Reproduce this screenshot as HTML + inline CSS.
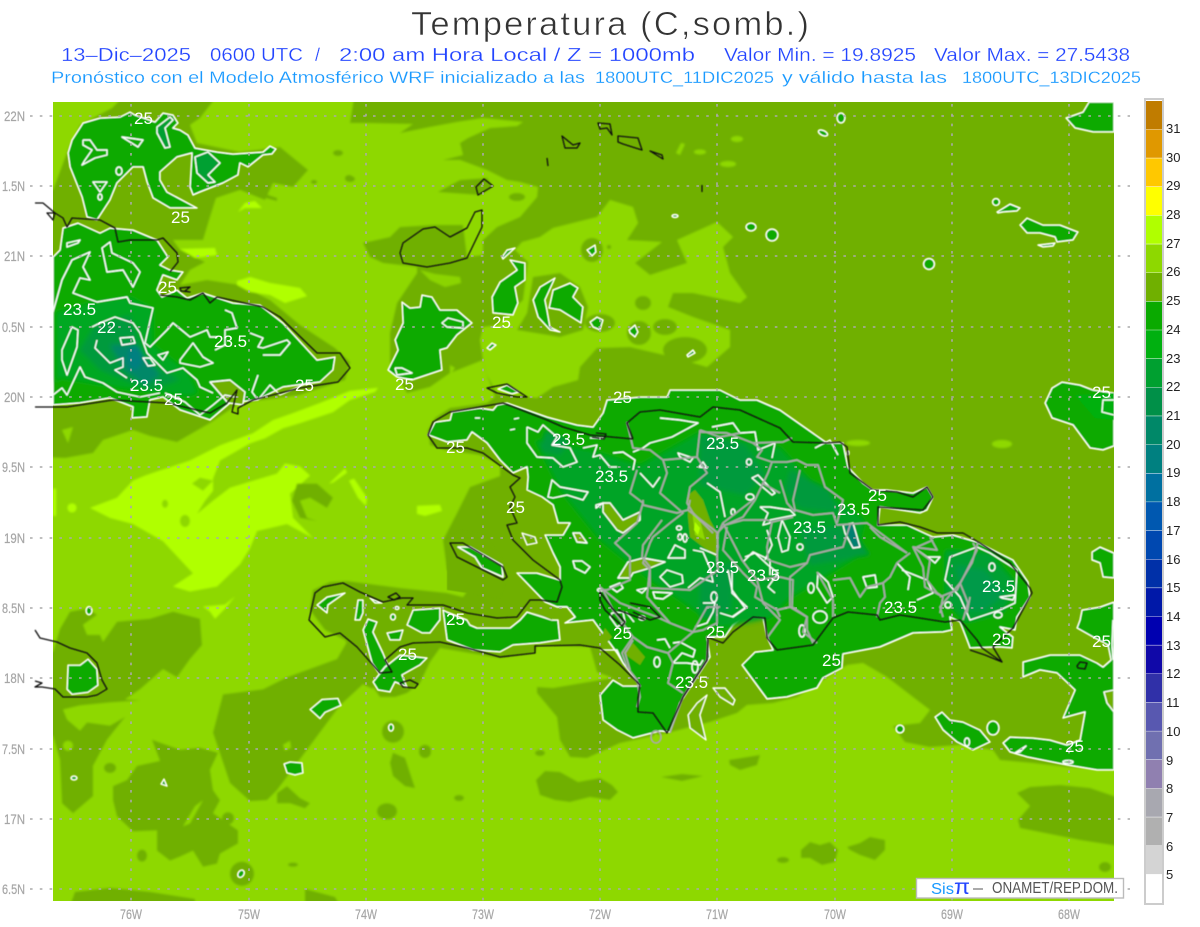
<!DOCTYPE html>
<html lang="es"><head><meta charset="utf-8"><title>Temperatura</title>
<style>
html,body{margin:0;padding:0;background:#fff;width:1200px;height:927px;overflow:hidden}
svg{display:block;font-family:"Liberation Sans",sans-serif}
.d{fill:#70b000}.l{fill:#8ed800}.y{fill:#b0ff00}
.g{fill:#0aaa00;stroke:#fff;stroke-width:1.5;stroke-linejoin:round}
.o{fill:#70b000;stroke:#fff;stroke-width:1.4;stroke-linejoin:round}
.n{fill:#00a030;stroke:#fff;stroke-width:1.3}
.w polyline,.w ellipse,.w polygon{fill:none;stroke:#fff;stroke-width:1.4;stroke-linejoin:round}
.p polyline{fill:none;stroke:#a9a9a9;stroke-width:1.7;stroke-linejoin:round}
.k polyline,.k polygon{fill:none;stroke:#111;stroke-width:1.3;stroke-linejoin:round}
.t text{fill:#fff;font-size:17px}
.a text{fill:#a6a6a6;font-size:13.5px;stroke:#a6a6a6;stroke-width:.2}
.c text{fill:#222;font-size:13px}
.gr line{stroke:#aaa;stroke-width:1.6;stroke-dasharray:2.6 7.2}
</style></head><body>
<svg width="1200" height="927" viewBox="0 0 1200 927" xmlns="http://www.w3.org/2000/svg">
<defs>
<clipPath id="m"><rect x="53" y="102" width="1061" height="799"/></clipPath>
<filter id="b1" x="-2%" y="-2%" width="104%" height="104%"><feGaussianBlur stdDeviation="1.1"/></filter>
<filter id="b2" x="-5%" y="-5%" width="110%" height="110%"><feGaussianBlur stdDeviation="2.5"/></filter>
<filter id="b0" x="-2%" y="-2%" width="104%" height="104%"><feGaussianBlur stdDeviation="0.4"/></filter>
</defs>
<rect width="1200" height="927" fill="#fff"/>
<text x="411" y="35" font-size="33" fill="#333" letter-spacing="2" stroke="#fff" stroke-width=".6" paint-order="fill" textLength="400" lengthAdjust="spacingAndGlyphs">Temperatura (C,somb.)</text>
<g font-size="18" fill="#2244ff" stroke="#fff" stroke-width=".25">
<text x="61" y="61" textLength="130" lengthAdjust="spacingAndGlyphs">13–Dic–2025</text>
<text x="210" y="61" textLength="93" lengthAdjust="spacingAndGlyphs">0600 UTC</text>
<text x="315" y="61">/</text>
<text x="339" y="61" textLength="356" lengthAdjust="spacingAndGlyphs">2:00 am Hora Local / Z = 1000mb</text>
<text x="724" y="61" textLength="192" lengthAdjust="spacingAndGlyphs">Valor Min. = 19.8925</text>
<text x="934" y="61" textLength="196" lengthAdjust="spacingAndGlyphs">Valor Max. = 27.5438</text>
</g>
<g font-size="17" fill="#1899ff" stroke="#fff" stroke-width=".2">
<text x="51" y="83" textLength="534" lengthAdjust="spacingAndGlyphs">Pronóstico con el Modelo Atmosférico WRF inicializado a las</text>
<text x="595" y="83" textLength="179" lengthAdjust="spacingAndGlyphs">1800UTC_11DIC2025</text>
<text x="782" y="83" textLength="165" lengthAdjust="spacingAndGlyphs">y válido hasta las</text>
<text x="962" y="83" textLength="179" lengthAdjust="spacingAndGlyphs">1800UTC_13DIC2025</text>
</g>

<g clip-path="url(#m)">
<g filter="url(#b1)">
<rect x="30" y="80" width="1110" height="840" class="l"/>
<!-- lime band + scaled SW group -->
<g transform="translate(0,400) scale(1,1.008) translate(0,-400)">
<polygon class="y" points="378,388 350,391 320,403 293,413 273,420 253,433 220,445 190,460 160,470 145,475 133,480 117,497 90,507 110,517 133,523 163,540 193,572 173,585 190,590 217,585 240,563 250,547 257,530 287,523 313,537 293,517 290,493 310,475 300,466 285,463 277,473 230,487 213,500 197,513 205,500 213,490 213,478 220,460 250,443 265,438 283,428 300,423 333,412 350,400 375,392"/>
<polygon class="l" points="192,483 200,477 213,480 203,490"/>
<ellipse cx="165" cy="503" rx="3" ry="4" class="l"/><ellipse cx="185" cy="520" rx="5" ry="6" class="l"/>
<polygon class="y" points="329,483 345,468 347,472 333,482"/><polygon class="y" points="349,480 354,478 367,497 366,505 358,497"/>
<polygon class="y" points="417,505 440,504 442,510 425,515 417,513"/>
<circle cx="72" cy="507" r="4.5" class="y"/><rect x="53" y="488" width="3" height="27" class="y"/>
<polygon class="y" points="203,605 225,603 235,595 225,607 215,617 210,610"/>
<polygon class="d" points="297,483 317,483 333,497 327,507 310,497 300,500 307,517 317,520 300,517 292,500"/>
<polygon class="d" points="40,650 53,650 60,627 70,610 87,607 97,613 83,623 87,633 100,633 103,640 117,620 150,617 173,610 200,617 202,643 190,657 177,675 163,667 140,687 125,697 140,698 123,717 107,737 93,763 93,793 73,810 62,800 60,757 53,733 40,733"/>
<polygon class="l" points="140,698 110,700 80,703 63,707 67,717 80,728 87,720 110,723 133,710"/>
<ellipse cx="68" cy="743" rx="5" ry="5" class="l"/><ellipse cx="110" cy="765" rx="6" ry="5" class="d"/>
<polygon class="d" points="113,783 127,777 137,763 160,758 152,737 180,747 200,745 218,750 210,767 213,787 220,797 213,810 238,827 238,840 220,850 217,860 203,863 193,847 180,853 170,857 157,847 157,827 133,828 117,813 113,797"/>
<polygon class="l" points="203,797 190,820 183,823 195,803"/><circle cx="228" cy="815" r="6" class="d"/>
<ellipse cx="142" cy="852" rx="5" ry="6" class="d"/>
<polygon class="d" points="347,640 337,657 287,675 263,687 223,692 213,730 230,780 250,798 267,797 277,787 307,747 340,703 363,682 373,687 373,660"/>
<polygon class="l" points="283,742 290,738 291,745 285,748"/>
<polygon class="d" points="277,790 287,783 300,795 310,800 305,805 290,800 277,800"/>
<polygon class="d" points="393,750 405,755 410,770 415,785 405,783 393,773 390,760"/>
<circle cx="425" cy="748" r="6" class="d"/><ellipse cx="387" cy="808" rx="10" ry="8" class="d"/><circle cx="393" cy="729" r="11" class="d"/>
<circle cx="242" cy="870" r="12" class="d"/><polygon class="d" points="67,910 75,888 110,884 150,888 195,895 195,910"/>
<polygon class="d" points="305,885 335,893 345,910 305,910"/><ellipse cx="293" cy="861" rx="5" ry="2" class="d"/>
</g>
<!-- upper left dark -->
<polygon class="d" points="40,190 53,190 68,150 80,125 112,108 128,92 220,92 200,118 190,125 197,143 240,152 280,147 308,170 293,187 273,183 265,200 240,190 216,198 210,217 203,240 173,240 180,250 205,262 190,270 180,285 207,280 240,285 270,300 300,325 335,348 350,362 345,380 300,395 240,403 210,423 177,442 150,436 133,430 103,440 93,453 65,458 40,457"/>
<ellipse cx="338" cy="153" rx="5" ry="3" class="d"/><ellipse cx="349" cy="178" rx="4" ry="3" class="d"/><ellipse cx="314" cy="182" rx="3" ry="2" class="d"/>
<polygon class="d" points="250,192 265,194 277,198 277,201 262,197"/>
<polygon class="y" points="238,212 245,203 255,201 262,208 245,208"/>
<polygon class="y" points="180,249 215,248 217,255 195,258"/>
<polygon class="y" points="237,281 250,277 270,283 300,288 307,296 285,303 270,295 250,292 237,285"/>
<polygon class="l" points="62,430 73,427 68,443"/>
<!-- main east dark -->
<polygon class="d" points="355,92 1130,92 1130,770 1114,770 1067,767 1033,763 1000,760 993,750 960,745 930,747 905,742 893,726 920,723 930,710 913,697 887,677 863,663 847,665 823,680 797,697 773,703 747,705 737,713 710,722 667,733 620,743 587,758 570,757 560,740 557,717 537,693 537,687 553,688 600,680 613,678 597,672 590,647 537,645 535,653 500,658 440,648 430,662 420,683 407,693 395,697 380,697 373,687 345,640 325,630 310,610 313,590 330,582 347,581 400,588 447,593 463,597 473,583 447,570 443,540 457,513 470,487 500,476 500,465 480,455 445,450 430,445 428,430 435,418 450,408 487,403 495,397 487,375 483,360 450,373 430,387 407,393 390,363 390,333 397,303 417,273 417,267 383,263 370,257 363,243 390,237 400,227 433,225 463,225 467,257 483,255 483,240 497,227 520,217 537,197 538,187 520,182 507,180 487,170 460,160 443,160 463,155 460,143 468,138 490,128 517,126 523,122 483,118 457,122 430,127 400,133 413,124 367,123 350,123"/>
<polygon class="d" points="438,192 460,180 487,178 493,187 480,195"/>
<ellipse cx="350" cy="179" rx="5" ry="3" class="d"/>
<!-- light lobe -->
<polygon class="l" points="522,242 540,237 553,228 597,217 610,200 633,207 638,223 627,240 662,242 635,263 650,275 687,263 677,240 717,222 733,237 723,247 730,273 747,297 740,303 693,293 673,293 668,307 693,317 730,330 730,347 707,367 673,357 630,347 597,348 580,367 578,380 553,387 537,398 497,394 487,375 483,360 480,340 483,327 497,325 523,300 528,262 515,250"/>
<polygon class="d" points="527,313 533,277 560,273 580,287 588,307 583,330 560,337 517,330"/>
<ellipse cx="643" cy="303" rx="8" ry="7" class="d"/><ellipse cx="639" cy="333" rx="12" ry="12" class="d"/>
<ellipse cx="665" cy="327" rx="12" ry="8" class="d"/><ellipse cx="685" cy="350" rx="22" ry="13" class="d"/>
<ellipse cx="600" cy="323" rx="15" ry="9" class="d"/><ellipse cx="592" cy="250" rx="11" ry="12" class="d"/>
<ellipse cx="517" cy="197" rx="8" ry="4" class="d"/><ellipse cx="609" cy="247" rx="2" ry="2" class="d"/>
<polygon class="l" points="676,153 681,143 685,144 680,155"/><ellipse cx="700" cy="152" rx="6" ry="2.5" class="l"/>
<ellipse cx="728" cy="164" rx="8" ry="3" class="l"/><ellipse cx="737" cy="139" rx="6" ry="3" class="l"/>
<ellipse cx="858" cy="443" rx="12" ry="3" class="l"/><ellipse cx="1002" cy="444" rx="10" ry="4" class="l"/>
<polygon class="l" points="420,270 435,274 460,277 461,283 445,287 430,280" opacity=".9"/>
<polygon class="l" points="450,365 455,368 450,375" />
<!-- other dark blobs -->
<polygon class="d" points="536,780 545,771 560,772 578,782 600,778 612,785 618,792 610,800 590,797 570,802 555,800 540,795"/>
<ellipse cx="459" cy="798" rx="5" ry="3" class="d"/><ellipse cx="540" cy="753" rx="5" ry="3" class="d"/>
<polygon class="d" points="729,760 760,755 757,765 740,770 730,765"/><polygon class="d" points="661,777 682,774 703,776 682,781"/>
<polygon class="d" points="801,850 810,842 820,845 830,842 838,850 835,862 822,865 810,858 801,858"/><ellipse cx="783" cy="860" rx="6" ry="3" class="d"/>
<polygon class="d" points="847,847 860,843 870,837 885,840 885,850 875,860 860,855 850,850"/>
<polygon class="d" points="1017,793 1030,787 1060,785 1090,788 1125,800 1125,847 1080,840 1045,833 1020,828 1018,820 1030,806"/>
<ellipse cx="1105" cy="867" rx="6" ry="5" class="d"/>
<polygon class="d" points="893,726 905,742 930,747 915,735"/>
<ellipse cx="425" cy="752" rx="6" ry="6" class="d"/>
</g>

<g filter="url(#b0)">
<!-- green regions -->
<polygon class="g" points="68,153 72,140 83,123 100,118 120,117 130,112 135,115 155,122 163,113 173,115 178,123 173,128 180,130 188,135 195,148 217,152 233,154 263,152 270,146 276,149 272,154 263,155 248,167 240,163 238,175 223,183 200,192 193,195 190,187 192,153 177,157 160,172 160,180 167,192 197,208 170,208 153,198 147,182 143,167 133,167 117,183 110,200 97,220 87,217 82,197 70,167"/>
<polygon class="g" points="53,257 60,250 63,228 78,223 100,233 110,228 133,230 157,240 168,257 160,265 170,270 183,272 177,280 163,275 157,290 162,297 177,290 187,298 203,293 233,303 260,305 283,323 317,360 335,357 333,370 320,382 283,387 273,392 257,400 230,403 210,420 180,410 163,397 150,400 147,417 132,418 133,407 110,398 80,403 53,405"/>
<g filter="url(#b2)">
<polygon fill="#00a822" points="56,312 95,302 130,297 153,309 153,345 188,372 198,393 188,396 120,388 60,378 56,383"/>
<polygon fill="#009a3c" points="95,325 130,315 145,360 180,380 150,390 100,370 80,350"/>
<polygon fill="#008868" points="110,345 135,345 160,375 145,385 125,370"/>
<ellipse cx="135" cy="358" rx="7" ry="12" fill="#008080"/>
</g>
<polygon class="o" points="210,382 230,380 245,392 243,405 228,403"/>
<polygon class="g" points="402,302 410,308 420,307 422,295 432,297 440,310 457,310 472,323 457,335 447,348 440,350 442,370 427,375 412,380 397,377 388,370 398,350 395,340 403,323"/>
<polygon class="g" points="510,260 525,263 525,280 515,287 518,303 513,315 493,313 492,297 500,282 517,270"/>
<polygon class="g" points="502,257 507,250 515,248 503,259"/><polygon class="g" points="487,348 492,343 496,345 490,350"/>
<polygon class="g" points="555,278 540,287 533,300 538,317 550,330 560,332 550,327 547,310 545,300"/>
<polygon class="g" points="553,290 570,283 578,288 573,297 583,307 581,323 560,310 549,308"/>
<polygon class="g" points="590,322 597,317 603,320 600,330 593,327"/><polygon class="g" points="629,330 635,325 638,332 635,337 630,333"/>
<polygon class="g" points="687,355 693,350 695,353 688,357"/><polygon class="g" points="587,250 595,245 596,252 592,256"/>
<ellipse cx="675" cy="216" rx="3" ry="1.5" class="g"/><ellipse cx="751" cy="227" rx="5" ry="4" class="g"/>
<circle cx="772" cy="235" r="6" class="g"/><circle cx="929" cy="264" r="5.5" class="g"/>
<ellipse cx="841" cy="118" rx="4" ry="5" class="g"/><ellipse cx="823" cy="133" rx="5" ry="2.5" class="g" transform="rotate(25 823 133)"/>
<circle cx="996" cy="202" r="3.5" class="g"/>
<polygon class="g" points="997,212 1010,204 1020,208 1017,211 1003,212 998,213"/>
<polygon class="g" points="1020,225 1027,218 1043,225 1060,225 1078,232 1073,240 1057,242 1055,237 1040,233 1027,233"/>
<polygon class="g" points="1038,245 1055,243 1053,246 1043,247"/>
<polygon class="g" points="1089,102 1083,112 1066,118 1075,128 1093,132 1114,132 1114,102"/>
<polygon class="g" points="1045,403 1052,388 1062,382 1080,385 1093,390 1114,393 1114,446 1103,450 1090,448 1073,425 1052,418"/>
<polygon fill="#00b010" points="1075,395 1114,393 1114,420 1095,418"/>
<polygon class="g" points="1092,552 1100,547 1114,553 1114,578 1103,577 1100,563 1092,560"/>
<polygon class="g" points="1114,602 1100,607 1082,610 1080,620 1077,628 1093,637 1108,645 1111,660 1103,667 1097,663 1080,655 1050,655 1023,662 1023,677 1040,670 1057,673 1075,690 1063,718 1085,712 1080,740 1067,745 1050,740 1033,738 1010,737 1003,743 1010,752 1027,757 1067,765 1097,770 1114,770"/>
<polygon class="o" points="1114,690 1104,692 1107,703 1114,712"/>
<polygon class="g" points="935,717 942,712 950,720 963,722 980,730 990,742 973,750 957,742 943,730"/>
<ellipse cx="993" cy="728" rx="6" ry="7" class="g"/><ellipse cx="900" cy="729" rx="4" ry="4" class="g"/>
<polygon class="g" points="1015,753 1026,746 1020,752"/><ellipse cx="1068" cy="762" rx="5" ry="1.5" class="g"/>
<g transform="translate(0,400) scale(1,1.008) translate(0,-400)">
<polygon class="g" points="68,663 80,663 88,657 97,667 98,683 88,690 72,692 67,687"/>
<polygon class="g" points="310,707 322,697 338,696 341,703 325,710 320,716"/>
<polygon class="g" points="284,761 290,759 302,760 303,770 295,772 287,770"/>
<ellipse cx="89" cy="609" rx="3" ry="4" class="g"/><ellipse cx="74" cy="775" rx="3" ry="2" class="g"/>
<polygon class="g" points="161,781 164,776 167,783"/><ellipse cx="241" cy="870" rx="3" ry="4" class="g" transform="rotate(35 241 870)"/>
<ellipse cx="391" cy="725" rx="2.5" ry="3.5" class="g"/>
</g>
<polygon class="g" points="317,605 327,597 345,593 328,605 327,613"/>
<polygon class="g" points="355,620 358,600 363,600 363,613 360,620"/>
<polygon class="g" points="363,630 368,619 377,622 373,632 383,653 390,670 380,675 372,663"/>
<polygon class="g" points="373,682 385,667 400,655 427,658 420,665 402,675 407,687 395,682 390,692 378,690"/>
<polygon class="g" points="407,625 413,610 440,608 440,620 430,633 422,633"/>
<polygon class="g" points="387,633 403,630 400,640 390,640"/><polygon class="g" points="370,598 382,603 375,603"/>
<ellipse cx="393" cy="617" rx="2.5" ry="3" class="g"/><ellipse cx="397" cy="608" rx="2" ry="1.5" class="g"/>
<polygon class="g" points="443,610 447,640 473,650 500,652 513,645 540,643 560,640 558,620 552,620 527,612 520,620 510,628 477,628 470,625 467,620 447,612"/>
<polygon class="g" points="600,695 613,680 623,686 640,686 623,663 617,653 593,620 565,623 575,617 567,607 557,607 545,602 517,573 537,573 560,580 560,567 553,553 545,535 563,535 570,523 558,523 553,505 542,497 527,490 528,477 527,467 513,473 500,460 487,443 472,432 467,440 447,442 428,435 435,422 450,420 452,412 480,408 493,410 497,405 507,403 547,417 577,425 593,427 603,413 607,400 640,397 667,397 670,390 697,390 720,390 740,400 757,400 780,410 827,443 843,443 848,467 863,483 873,490 887,490 913,493 927,487 933,497 927,510 920,513 880,507 878,525 907,525 933,537 953,535 977,542 1013,560 1028,582 1030,597 1017,617 1015,630 1000,627 1013,637 1012,648 1000,647 970,648 967,640 960,622 950,617 952,630 943,632 913,633 880,647 843,654 842,668 823,678 817,688 787,697 767,699 742,665 755,652 773,650 767,637 763,618 743,617 733,625 725,637 707,637 710,657 680,703 670,732 660,731 633,738 617,730 603,720"/>
<!-- depth patches -->
<g filter="url(#b2)">
<polygon fill="#00a428" points="535,440 590,450 640,465 700,432 780,447 810,480 865,520 855,558 790,598 770,618 720,628 680,600 650,580 600,540 560,490"/>
<polygon fill="#009a3c" points="700,435 745,445 765,475 745,495 700,485"/><polygon fill="#009a3c" points="790,470 830,490 838,512 800,508 785,490"/>
<polygon fill="#009a3c" points="700,580 735,560 730,610 700,620"/><polygon fill="#009a3c" points="800,530 850,525 870,555 810,565"/>
<polygon fill="#009a3c" points="545,430 570,440 560,455 540,450"/>
<polygon fill="#00a030" points="945,550 990,552 1018,585 1003,613 965,623 945,600"/>
<polygon fill="#009a48" points="955,565 985,570 1005,595 985,610 965,610"/>
</g>
<polygon fill="#007f70" points="845,526 853,525 860,546 853,547"/>
<!-- olive overlays -->
<polygon class="o" points="603,503 610,503 623,520 640,512 640,520 623,533 617,530 603,512"/>
<polygon class="o" points="522,533 535,537 537,543 527,545"/><polygon class="o" points="573,533 580,533 587,543 577,542"/>
<polygon class="o" points="618,578 628,562 643,558 665,562 650,568 633,573 630,578"/>
<polygon class="d" points="688,495 695,490 703,500 710,520 718,535 718,558 703,547 690,537 688,517"/>
<polygon class="l" points="692,510 700,520 705,540 695,535"/><polygon class="y" points="695,522 700,528 698,535 694,530"/>
<polygon class="o" points="713,688 725,688 735,700 733,705 720,697"/>
<polygon class="d" points="623,653 633,643 645,657 640,665"/><polygon class="d" points="605,628 612,637 605,645 600,640"/>
<polygon class="o" points="697,703 707,695 700,715 706,740 690,728 688,715"/>
<polygon class="d" points="533,612 552,620 555,610 530,600"/>
<polygon class="d" points="447,540 447,590 500,598 510,570 485,535 460,530"/>
<polygon class="g" points="458,547 470,547 502,565 503,577 482,568 475,557"/>
<polygon class="g" points="498,389 507,385 519,392 512,394"/>
<!-- white inner contours -->
<g class="w">
<polyline points="83,140 90,140 97,150 107,150 107,155 95,158 82,165 85,160 92,150 83,145 83,140"/>
<polygon points="122,137 143,140 138,147"/><ellipse cx="119" cy="171" rx="3" ry="4"/>
<polygon points="93,182 107,182 100,192"/><ellipse cx="100" cy="197" rx="2" ry="3"/>
<polygon style="fill:#00a030" points="157,127 170,117 173,120 165,128 170,147 165,148 157,133"/>
<polygon style="fill:#00a030" points="195,157 208,152 220,163 208,175 215,182 208,183 197,173"/>
<polyline points="53,395 62,388 67,395 80,367 85,377 103,383 117,392 140,397 160,393"/>
<polyline points="53,312 62,280 72,260 90,252 83,267 90,280 80,278 73,293 97,302 127,297 130,303 153,308 145,343 150,347 167,330 173,323 190,337 207,330 210,337 217,337"/>
<polygon points="102,248 110,242 112,253 133,263 140,272 133,287 123,270 107,272"/>
<polygon points="67,243 80,240 78,243 67,247"/><polygon points="62,350 72,327 78,330 77,347 67,375 62,360"/>
<polyline points="92,327 100,323 115,317 133,323 140,333 147,353 167,373 183,368 197,380 200,387 213,393"/>
<polyline points="97,340 95,348 110,363 123,358 123,367 115,370 127,378"/>
<polygon points="120,338 133,337 135,343 122,345"/><polygon points="143,358 150,358 155,365 148,366"/>
<polygon points="158,355 168,352 163,360"/><polygon points="180,360 193,343 203,357 213,363 200,367 180,363"/>
<polyline points="225,310 232,313 237,328 225,330 225,345 215,350"/>
<polyline points="250,333 263,338 258,347 263,348 287,340 290,343 280,355 263,355"/>
<polyline points="165,393 185,402 200,415 213,405 225,395 235,397"/>
<polyline points="258,375 252,392 258,400 270,385 280,395 310,382"/>
<polygon points="442,323 448,318 463,322 463,328 447,327"/><polyline points="395,368 402,368 412,373 397,375 395,368"/>
<polyline points="1114,400 1103,400 1102,412 1114,415"/>
<polyline points="1113,620 1112,645 1113,660"/>
<ellipse cx="967" cy="742" rx="2.5" ry="4"/>
<polyline points="527,427 538,432 543,425 557,437 552,445 570,448 577,462 563,467 553,458 537,457 527,443 527,427"/>
<polyline points="583,448 597,445 593,457 600,455 610,467 617,467"/>
<polyline points="613,453 623,452 635,460 633,470"/>
<polygon points="552,480 560,487 588,492 583,500 567,495 553,498 548,497"/>
<polyline points="475,418 480,418"/><polyline points="514,419 519,418"/><polyline points="510,430 515,429"/>
<polyline points="660,418 680,420 698,423 672,437 650,443 643,448 633,452"/>
<polyline points="640,473 653,487 660,477"/>
<polyline points="712,427 733,423 740,433 755,432 758,450 775,443 772,458"/>
<polygon points="678,453 693,458 690,462 680,457"/><polygon points="703,462 707,468 699,467"/>
<polygon points="675,545 685,550 685,558 668,558"/><polygon points="660,577 667,570 682,575 683,583 670,587"/>
<polyline points="693,550 703,552 710,568 713,582 700,578 688,588"/>
<polygon points="653,592 672,593 663,599 655,598"/><polygon points="610,587 620,583 623,588 617,592"/>
<polygon points="637,590 647,588 642,593"/><polygon points="612,613 623,612 625,622 617,627 610,617"/>
<polyline points="703,603 715,603 713,612 707,623 695,627"/><ellipse cx="714" cy="597" rx="3" ry="5"/>
<polyline points="657,640 665,639 670,648"/><polyline points="673,643 680,642 695,650 693,657 682,653 673,663 687,663 700,665 703,660"/>
<ellipse cx="657" cy="662" rx="3" ry="5"/><ellipse cx="695" cy="667" rx="3" ry="6"/>
<polyline points="732,572 732,593 747,607 733,617 720,613"/>
<polyline points="743,562 753,552 770,560 770,575"/>
<polygon points="782,520 790,537 788,550 782,552 778,537"/>
<polyline points="760,507 770,507 790,510 795,515 770,520 770,523 763,525 768,513 760,507"/>
<polyline points="745,557 755,553 768,565 778,573 768,587 775,593"/>
<polyline points="728,570 732,590 745,608 732,617"/><polyline points="700,548 717,555 718,570"/><polyline points="707,483 720,492 725,517"/>
<polygon points="752,478 758,475 775,493 772,495"/><ellipse cx="750" cy="497" rx="4" ry="3"/><ellipse cx="733" cy="512" rx="2" ry="3"/><ellipse cx="800" cy="547" rx="3" ry="3"/>
<polygon points="843,525 853,523 860,547 853,548 845,533"/>
<polygon points="863,577 875,575 877,587 867,588"/><polyline points="897,563 910,577 908,590"/>
<polyline points="902,570 927,580 933,593 917,600"/><polyline points="913,547 927,557 940,557 935,563 928,557"/>
<polygon points="950,557 977,547 990,553 1017,570 1015,603 1000,610 970,620 960,597 945,580"/>
<polygon points="1000,597 1015,595 1013,600 1002,598"/><ellipse cx="992" cy="567" rx="3" ry="4"/><ellipse cx="998" cy="615" rx="4" ry="3"/><ellipse cx="948" cy="605" rx="3" ry="3"/>
<ellipse cx="820" cy="617" rx="7" ry="6"/><ellipse cx="811" cy="588" rx="3" ry="5"/><ellipse cx="802" cy="631" rx="3" ry="6"/>
<polygon points="818,573 828,582 833,597 827,603 817,587"/><ellipse cx="749" cy="462" rx="2.5" ry="3"/>
<polyline points="767,530 772,545 765,560"/>
<polyline points="815,448 830,440 838,455"/>
<ellipse cx="679" cy="528" rx="2.5" ry="2"/><ellipse cx="680" cy="537" rx="2" ry="3"/><ellipse cx="685" cy="538" rx="2" ry="4"/>
<ellipse cx="642" cy="618" rx="3" ry="2"/><ellipse cx="600" cy="590" rx="2.5" ry="1.5"/>
<polyline points="590,438 604,438"/><polyline points="626,612 634,622"/>
<polygon points="573,561 582,561 590,567 585,573 575,568"/>
<polygon points="596,505 603,503 596,508"/>
<polyline points="557,607 567,607 575,617 565,623"/>
<polyline points="600,650 617,650 623,663"/>
<ellipse cx="848" cy="453" rx="1" ry="2"/>
</g>
<!-- provinces -->
<g class="p">
<polyline points="700,432 727,433 753,443 783,442 792,438"/>
<polyline points="753,443 762,450 757,457 772,462 768,473 755,500 743,517 725,525 717,533 718,547 717,553"/>
<polyline points="772,462 787,462 797,460 807,465 818,465 825,487 843,500 837,523"/>
<polyline points="800,470 793,500 795,510 813,515 833,513 837,525 867,523 907,553"/>
<polyline points="780,480 787,503 795,512"/><polyline points="762,483 780,493"/>
<polyline points="725,525 743,520 767,520 772,522 793,517"/>
<polyline points="772,522 767,547 768,560 790,567 807,563 810,555 843,547 850,525"/>
<polyline points="727,527 723,550 743,573 757,587 755,597 777,610 780,617"/>
<polyline points="807,563 790,577 790,607 807,617 807,630 813,643"/><polyline points="790,607 777,610"/>
<polyline points="817,572 833,600 833,617"/>
<polyline points="833,580 850,578 860,597 867,587 883,583 885,597 880,603 877,617"/>
<polyline points="910,553 897,563 890,577 883,583"/>
<polyline points="913,547 930,560 927,580 937,593 943,597 940,613"/>
<polyline points="940,597 957,590 977,550 973,543"/><polyline points="970,597 967,613"/>
<polyline points="870,527 880,537 907,553"/><polyline points="917,547 933,540"/>
<polyline points="978,542 972,563 960,583 968,603 963,620"/><polyline points="960,583 940,607 943,617"/>
<polyline points="930,537 937,550 913,547 923,567 925,587 943,597"/>
<polyline points="643,500 643,505 677,513 688,510 690,500"/>
<polyline points="688,510 718,533 723,523 753,500"/>
<polyline points="662,520 643,545 642,557 650,567 647,597 670,623 693,632 707,607 720,607"/>
<polyline points="718,533 717,560 718,570 700,583 690,590 650,588"/>
<polyline points="600,587 620,603 657,617 670,623"/>
<polyline points="717,607 717,623 703,630 693,632"/>
<polyline points="633,637 647,647 668,653 673,663 668,683 683,693"/>
<polyline points="633,637 622,653 627,667 637,680 640,697 637,707"/>
<polyline points="693,632 668,653"/>
<polyline points="723,523 742,560 757,580 763,603 780,620 767,638"/>
<polyline points="757,580 780,577 793,580 792,607 807,617 803,632 817,643"/>
<polyline points="627,422 633,448 650,450 663,460 667,473 660,493 683,513 670,523 653,537 650,543 643,563 650,570 650,587"/>
<polyline points="663,460 697,457 700,430"/><polyline points="700,430 720,437 740,433"/>
<polyline points="697,457 707,473 690,487 687,503 693,513 713,533"/>
<polyline points="637,470 633,483 630,493 643,503 637,523 615,543 630,557 630,580 607,590 600,590"/>
<polyline points="603,590 613,610 633,637"/><polyline points="633,640 625,653 630,670"/>
<polyline points="670,733 683,697 707,660 708,640" />
<ellipse cx="656" cy="737" rx="5" ry="6" style="fill:none;stroke:#a9a9a9;stroke-width:1.7"/>
</g>
<ellipse cx="656" cy="737" rx="2" ry="3" fill="#8ed800"/>
</g>
</g>
<!-- coast -->
<g class="k" filter="url(#b0)">
<polyline points="35,203 43,203 55,213 47,213 53,220 55,213 63,218 67,227 72,218 100,220 115,228 118,242 130,240 157,240 163,238 177,253 178,262 170,272"/>
<polygon points="180,288 190,287 185,291 190,292 181,291"/>
<polyline points="160,295 177,297 190,300 203,293 210,303 217,297 263,307 280,317 317,353 340,353 350,368 338,382 300,388 253,400 238,408 238,414 232,412 237,390 227,403 210,413 167,403 113,400 67,407 35,407"/>
<polyline points="35,630 40,638 57,642 70,648 87,653 97,663 102,680 107,689 97,695 87,697 63,697 55,689 42,687 35,687 42,683 35,681"/>
<polygon points="598,123 610,124 612,135 607,128 600,129"/><polygon points="618,136 638,138 642,150 623,144 618,142"/>
<polygon points="562,136 573,145 580,143 577,148 565,148"/><polygon points="650,151 662,155 663,159"/>
<polyline points="547,158 548,166"/><polyline points="702,185 702,192"/>
<polygon points="476,187 484,179 493,186 478,195"/>
<polygon points="403,243 423,229 435,227 450,237 467,228 475,212 482,210 482,227 467,258 450,263 427,267 403,263 400,253"/>
<polygon points="487,388 507,384 527,397 517,397 497,393"/>
<polygon points="450,543 463,543 503,567 507,577 503,580 483,570 457,557"/>
<polyline points="633,439 590,435 563,427 547,420 503,403 450,412 433,422 428,435 437,448 453,448 467,448 483,453 513,475 520,478 510,487 515,497 510,507 517,523 507,525 513,540 533,560 560,580 562,587 557,602 540,600 530,600 517,617 497,618 467,613 443,605 407,605 413,598 402,598 383,602 360,592 343,583 323,587 315,593 309,620 325,637 340,633 357,647 380,673 392,672 385,660 400,647 413,643 440,642 467,648 500,657 535,653 535,646 580,645 600,648 620,665 640,685 638,698 638,712 653,713 667,733 683,697 707,660 708,640 707,637 723,643 733,632 753,617 765,618 767,638 777,650 813,645 833,618 848,612 877,615 880,620 900,615 913,617 945,622 960,620 977,640 982,648 1002,662 993,647 1013,628 1032,593 1030,588 1010,563 980,543 963,533 937,533 920,527 900,522 878,525 878,507 923,510 933,497 927,487 913,497 897,492 873,490 850,473 847,447 840,442 827,443 793,442 780,428 740,410 713,407 700,417 660,410 640,412 627,423 633,439"/>
<polyline points="592,437 604,439 606,434 596,433"/>
<polygon points="600,592 612,608 625,622 622,626 605,610 600,600"/>
<polyline points="618,610 645,620"/><polyline points="630,603 650,607 660,617 650,620 633,612"/>
<polygon points="1077,666 1080,662 1087,663 1085,669 1078,668"/>
<polyline points="970,650 985,655 1002,662"/>
<polygon points="400,683 410,680 418,684 415,688 403,687"/>
<polygon points="388,597 396,593 400,597 394,600"/>
</g>
<!-- grid -->
<g class="gr">
<line x1="30" y1="116" x2="1130" y2="116"/><line x1="30" y1="186" x2="1130" y2="186"/><line x1="30" y1="256" x2="1130" y2="256"/><line x1="30" y1="327" x2="1130" y2="327"/>
<line x1="30" y1="397" x2="1130" y2="397"/><line x1="30" y1="467" x2="1130" y2="467"/><line x1="30" y1="538" x2="1130" y2="538"/><line x1="30" y1="608" x2="1130" y2="608"/>
<line x1="30" y1="678" x2="1130" y2="678"/><line x1="30" y1="749" x2="1130" y2="749"/><line x1="30" y1="819" x2="1130" y2="819"/><line x1="30" y1="889" x2="1130" y2="889"/>
<line x1="131" y1="104" x2="131" y2="906"/><line x1="249" y1="104" x2="249" y2="906"/><line x1="366" y1="104" x2="366" y2="906"/><line x1="483" y1="104" x2="483" y2="906"/>
<line x1="600" y1="104" x2="600" y2="906"/><line x1="717" y1="104" x2="717" y2="906"/><line x1="835" y1="104" x2="835" y2="906"/><line x1="952" y1="104" x2="952" y2="906"/><line x1="1069" y1="104" x2="1069" y2="906"/>
</g>
<!-- contour labels -->
<g class="t">
<text x="134" y="124">25</text><text x="171" y="223">25</text><text x="158" y="293">25</text><text x="63" y="315">23.5</text><text x="97" y="333">22</text>
<text x="214" y="347">23.5</text><text x="130" y="391">23.5</text><text x="164" y="405">25</text><text x="295" y="391">25</text><text x="395" y="390">25</text>
<text x="492" y="328">25</text><text x="613" y="403">25</text><text x="446" y="453">25</text><text x="552" y="445">23.5</text><text x="595" y="482">23.5</text>
<text x="506" y="513">25</text><text x="706" y="449">23.5</text><text x="868" y="501">25</text><text x="837" y="515">23.5</text><text x="793" y="533">23.5</text>
<text x="706" y="573">23.5</text><text x="747" y="581">23.5</text><text x="982" y="592">23.5</text><text x="884" y="613">23.5</text>
<text x="446" y="625">25</text><text x="613" y="639">25</text><text x="706" y="638">25</text><text x="398" y="660">25</text><text x="822" y="666">25</text>
<text x="992" y="645">25</text><text x="1092" y="647">25</text><text x="1092" y="398">25</text><text x="675" y="688">23.5</text><text x="1065" y="752">25</text>
</g>
<!-- axis labels -->
<g class="a">
<text x="4" y="121" textLength="21" lengthAdjust="spacingAndGlyphs">22N</text><text x="2" y="191" textLength="23" lengthAdjust="spacingAndGlyphs">1.5N</text><text x="4" y="261" textLength="21" lengthAdjust="spacingAndGlyphs">21N</text><text x="2" y="332" textLength="23" lengthAdjust="spacingAndGlyphs">0.5N</text><text x="4" y="402" textLength="21" lengthAdjust="spacingAndGlyphs">20N</text><text x="2" y="472" textLength="23" lengthAdjust="spacingAndGlyphs">9.5N</text>
<text x="4" y="543" textLength="21" lengthAdjust="spacingAndGlyphs">19N</text><text x="2" y="613" textLength="23" lengthAdjust="spacingAndGlyphs">8.5N</text><text x="4" y="683" textLength="21" lengthAdjust="spacingAndGlyphs">18N</text><text x="2" y="754" textLength="23" lengthAdjust="spacingAndGlyphs">7.5N</text><text x="4" y="824" textLength="21" lengthAdjust="spacingAndGlyphs">17N</text><text x="2" y="894" textLength="23" lengthAdjust="spacingAndGlyphs">6.5N</text>
</g>
<g class="a">
<text x="120" y="919" textLength="22" lengthAdjust="spacingAndGlyphs">76W</text><text x="238" y="919" textLength="22" lengthAdjust="spacingAndGlyphs">75W</text><text x="355" y="919" textLength="22" lengthAdjust="spacingAndGlyphs">74W</text><text x="472" y="919" textLength="22" lengthAdjust="spacingAndGlyphs">73W</text><text x="589" y="919" textLength="22" lengthAdjust="spacingAndGlyphs">72W</text><text x="706" y="919" textLength="22" lengthAdjust="spacingAndGlyphs">71W</text><text x="824" y="919" textLength="22" lengthAdjust="spacingAndGlyphs">70W</text><text x="941" y="919" textLength="22" lengthAdjust="spacingAndGlyphs">69W</text><text x="1058" y="919" textLength="22" lengthAdjust="spacingAndGlyphs">68W</text>
</g>
<!-- legend -->
<rect x="1145" y="99" width="18" height="805" fill="#fff" stroke="#ccc" stroke-width="2"/>
<g>
<rect x="1146" y="101" width="16" height="28.2" fill="#c07c00"/><rect x="1146" y="129.6" width="16" height="28.2" fill="#e09800"/><rect x="1146" y="158.3" width="16" height="28.2" fill="#ffc800"/><rect x="1146" y="187" width="16" height="28.2" fill="#ffff00"/>
<rect x="1146" y="215.6" width="16" height="28.2" fill="#b0ff00"/><rect x="1146" y="244.3" width="16" height="28.2" fill="#8ed800"/><rect x="1146" y="272.9" width="16" height="28.2" fill="#70b000"/><rect x="1146" y="301.6" width="16" height="28.2" fill="#0aaa00"/>
<rect x="1146" y="330.2" width="16" height="28.2" fill="#00b010"/><rect x="1146" y="358.9" width="16" height="28.2" fill="#00a030"/><rect x="1146" y="387.5" width="16" height="28.2" fill="#009048"/><rect x="1146" y="416.2" width="16" height="28.2" fill="#008868"/>
<rect x="1146" y="444.8" width="16" height="28.2" fill="#008080"/><rect x="1146" y="473.5" width="16" height="28.2" fill="#0070a0"/><rect x="1146" y="502.1" width="16" height="28.2" fill="#0058b0"/><rect x="1146" y="530.8" width="16" height="28.2" fill="#0048b0"/>
<rect x="1146" y="559.4" width="16" height="28.2" fill="#0030a8"/><rect x="1146" y="588.1" width="16" height="28.2" fill="#0018a8"/><rect x="1146" y="616.7" width="16" height="28.2" fill="#0000b0"/><rect x="1146" y="645.4" width="16" height="28.2" fill="#1008a8"/>
<rect x="1146" y="674" width="16" height="28.2" fill="#3030a8"/><rect x="1146" y="702.7" width="16" height="28.2" fill="#5858b0"/><rect x="1146" y="731.3" width="16" height="28.2" fill="#7070b0"/><rect x="1146" y="760" width="16" height="28.2" fill="#9080b0"/>
<rect x="1146" y="788.6" width="16" height="28.2" fill="#a8a8b0"/><rect x="1146" y="817.3" width="16" height="28.2" fill="#b0b0b0"/><rect x="1146" y="845.9" width="16" height="28.2" fill="#d4d4d4"/><rect x="1146" y="874.6" width="16" height="28.2" fill="#fff"/>
</g>
<g class="c">
<text x="1166" y="133">31</text><text x="1166" y="162">30</text><text x="1166" y="190">29</text><text x="1166" y="219">28</text><text x="1166" y="248">27</text><text x="1166" y="276">26</text><text x="1166" y="305">25</text>
<text x="1166" y="334">24</text><text x="1166" y="363">23</text><text x="1166" y="391">22</text><text x="1166" y="420">21</text><text x="1166" y="449">20</text><text x="1166" y="477">19</text><text x="1166" y="506">18</text>
<text x="1166" y="535">17</text><text x="1166" y="564">16</text><text x="1166" y="592">15</text><text x="1166" y="621">14</text><text x="1166" y="650">13</text><text x="1166" y="678">12</text><text x="1166" y="707">11</text>
<text x="1166" y="736">10</text><text x="1166" y="765">9</text><text x="1166" y="793">8</text><text x="1166" y="822">7</text><text x="1166" y="851">6</text><text x="1166" y="879">5</text>
</g>
<!-- logo box -->
<rect x="916.5" y="878.5" width="207" height="19.5" fill="#fff" stroke="#bbb" stroke-width="1.4"/>
<text x="931" y="894" font-size="16" fill="#1899ff" textLength="23" lengthAdjust="spacingAndGlyphs">Sis</text>
<text x="954" y="894" font-size="21" fill="#2244ff" textLength="16" lengthAdjust="spacingAndGlyphs">π</text>
<text x="973" y="893" font-size="15" fill="#555" textLength="10" lengthAdjust="spacingAndGlyphs">–</text>
<text x="992" y="893" font-size="15.5" fill="#555" textLength="126" lengthAdjust="spacingAndGlyphs">ONAMET/REP.DOM.</text>
</svg>
</body></html>
